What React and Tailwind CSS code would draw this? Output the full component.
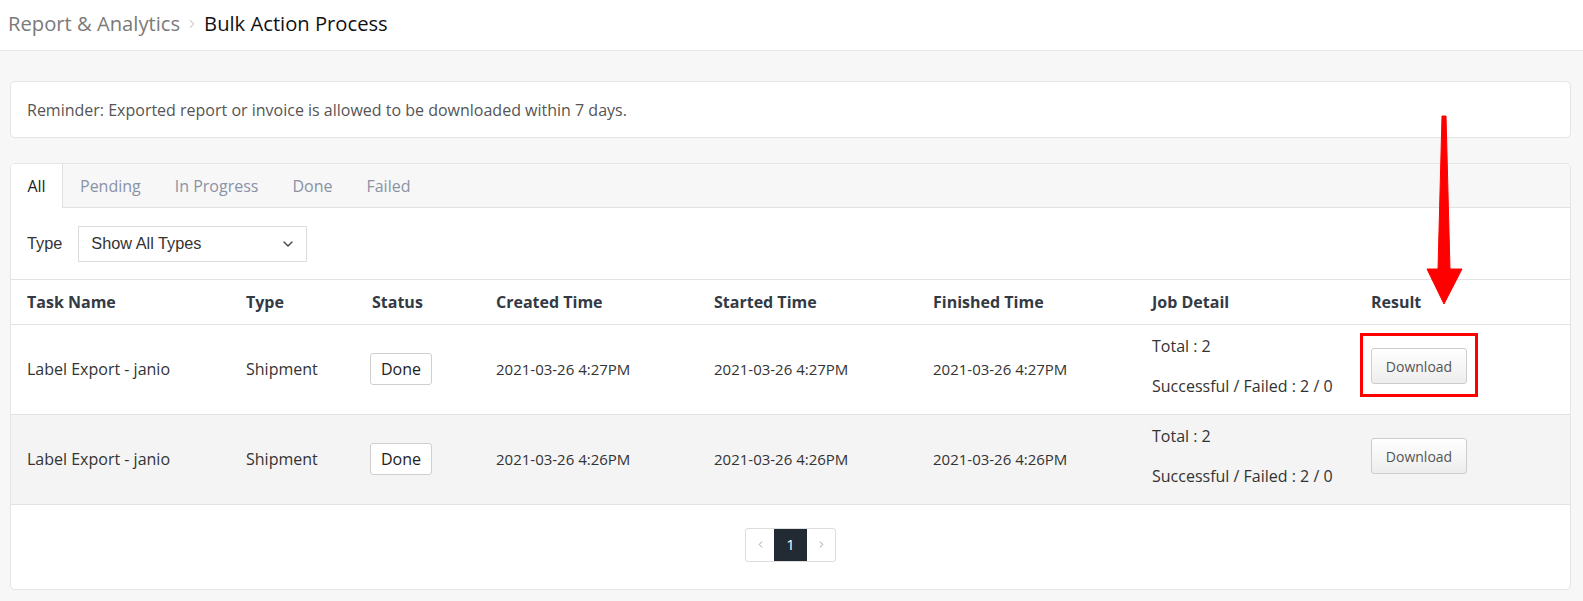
import React from "react";
import { ChevronDown, ChevronLeft, ChevronRight } from "lucide-react";

const tabs = ["All", "Pending", "In Progress", "Done", "Failed"];

const columns = [
  { label: "Task Name", width: "w-[235px]" },
  { label: "Type", width: "w-[126px]" },
  { label: "Status", width: "w-[124px]" },
  { label: "Created Time", width: "w-[218px]" },
  { label: "Started Time", width: "w-[219px]" },
  { label: "Finished Time", width: "w-[219px]" },
  { label: "Job Detail", width: "w-[219px]" },
  { label: "Result", width: "" },
];

const rows = [
  { time: "2021-03-26 4:27PM" },
  { time: "2021-03-26 4:26PM" },
];

const DownloadButton = () => (
  <button
    type="button"
    className="mb-[6px] h-[36px] w-[96px] rounded-[3px] border border-[#cccccc] bg-gradient-to-b from-white to-[#ededed] align-middle text-[14px] text-[#555]"
  >
    Download
  </button>
);

const RedArrow = () => (
  <svg
    className="absolute left-[1425px] top-[114px]"
    width="40"
    height="192"
    viewBox="0 0 40 192"
  >
    <path
      d="M17 2 L21 2 L25 155 L37 155 L19 190 L2 155 L13 155 Z"
      fill="#ff0000"
      stroke="#ff0000"
      strokeWidth="1"
      strokeLinejoin="round"
    />
  </svg>
);

export default function App() {
  return (
    <div className="relative min-h-[601px] bg-[#f7f7f7] font-['Open_Sans',sans-serif] text-[#333]">
      {/* Breadcrumb */}
      <div className="flex h-[51px] items-center border-b border-[#e6e6e6] bg-white px-[8px] pb-[4px] text-[20.2px]">
        <span className="text-[#7a7a7a]">Report &amp; Analytics</span>
        <ChevronRight className="mx-[5px] mt-[2px] h-[14px] w-[14px] text-[#aaa]" strokeWidth={1.5} />
        <span className="text-[#111]">Bulk Action Process</span>
      </div>

      <div className="flex flex-col gap-[25px] pl-[10px] pr-[12px] pt-[30px]">
        {/* Reminder */}
        <div className="flex h-[57px] items-center rounded-[5px] border border-[#e5e5e5] bg-white px-[16px] text-[16px] text-[#555]">
          Reminder: Exported report or invoice is allowed to be downloaded within 7 days.
        </div>

        {/* Main card */}
        <div className="overflow-hidden rounded-[5px] border border-[#e5e5e5] bg-white">
          {/* Tabs */}
          <div className="flex h-[44px] border-b border-[#e2e2e2] bg-[#f7f7f7] text-[16px]">
            {tabs.map((t, i) =>
              i === 0 ? (
                <div
                  key={t}
                  className="-mb-px flex w-[52px] items-center justify-center border-r border-[#e2e2e2] bg-white text-[#222]"
                >
                  {t}
                </div>
              ) : (
                <div
                  key={t}
                  className="flex items-center px-[17px] text-[#8a92a6]"
                >
                  {t}
                </div>
              )
            )}
          </div>

          {/* Filter */}
          <div className="flex h-[72px] items-center gap-[16px] border-b border-[#e2e2e2] px-[16px] font-['Liberation_Sans',Arial,sans-serif] text-[16.3px]">
            <span className="text-[#333]">Type</span>
            <div className="flex h-[36px] w-[229px] items-center justify-between border border-[#dcdcdc] bg-white pl-[12px] pr-[10px] text-[#333]">
              <span>Show All Types</span>
              <ChevronDown className="h-[16px] w-[16px] text-[#444]" strokeWidth={2} />
            </div>
          </div>

          {/* Table */}
          <table className="w-full table-fixed border-collapse text-[16px]">
            <thead>
              <tr className="h-[44px] border-b border-[#e2e2e2]">
                {columns.map((c, i) => (
                  <th
                    key={c.label}
                    className={`${c.width} ${i === 0 ? "pl-[16px]" : ""} text-left font-bold text-[#333a44]`}
                  >
                    {c.label}
                  </th>
                ))}
              </tr>
            </thead>
            <tbody>
              {rows.map((r, idx) => (
                <tr
                  key={idx}
                  className={`h-[90px] border-b border-[#e2e2e2] ${idx === 1 ? "bg-[#f4f4f4]" : "bg-white"}`}
                >
                  <td className="pl-[16px] text-[#333]">Label Export - janio</td>
                  <td>Shipment</td>
                  <td>
                    <span className="inline-flex h-[32px] w-[62px] -translate-x-[2px] items-center justify-center rounded-[3px] border border-[#cfcfcf] bg-white text-[16px] text-[#222]">
                      Done
                    </span>
                  </td>
                  <td className="text-[15px]">{r.time}</td>
                  <td className="text-[15px]">{r.time}</td>
                  <td className="text-[15px]">{r.time}</td>
                  <td>
                    <div className="mb-[7px] flex flex-col gap-[16px]">
                      <span>Total : 2</span>
                      <span>Successful / Failed : 2 / 0</span>
                    </div>
                  </td>
                  <td>
                    <DownloadButton />
                  </td>
                </tr>
              ))}
            </tbody>
          </table>

          {/* Pagination */}
          <div className="flex justify-center pb-[27px] pt-[23px]">
            <div className="flex h-[34px] overflow-hidden rounded-[3px] border border-[#dddddd] text-[#999]">
              <div className="flex w-[28px] items-center justify-center">
                <ChevronLeft className="h-[11px] w-[11px]" strokeWidth={2} />
              </div>
              <div className="flex w-[33px] items-center justify-center bg-[#222a33] text-[15px] text-white">
                1
              </div>
              <div className="flex w-[28px] items-center justify-center">
                <ChevronRight className="h-[11px] w-[11px]" strokeWidth={2} />
              </div>
            </div>
          </div>
        </div>
      </div>

      {/* Annotations */}
      <RedArrow />
      <div className="pointer-events-none absolute left-[1360px] top-[333px] h-[64px] w-[118px] border-[3px] border-[#ff0000]" />
    </div>
  );
}
